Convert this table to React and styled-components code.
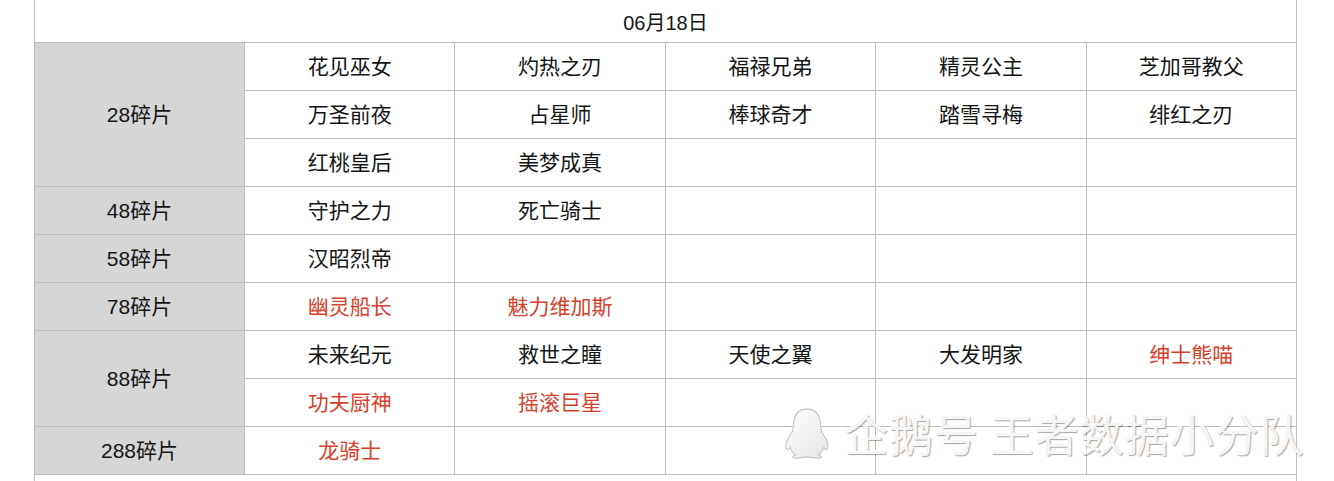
import styled, { createGlobalStyle } from 'styled-components';

const GlobalStyle = createGlobalStyle`
  html, body {
    margin: 0;
    padding: 0;
    background: #ffffff;
  }
  body {
    font-family: "Liberation Sans", "Noto Sans CJK SC", sans-serif;
  }
`

const RED = '#d6412c'

// each group: label + rows of 5 cells; "*" prefix = red
const grupos = [
  {
    label: '28碎片',
    linhas: [
      ['花见巫女', '灼热之刃', '福禄兄弟', '精灵公主', '芝加哥教父'],
      ['万圣前夜', '占星师', '棒球奇才', '踏雪寻梅', '绯红之刃'],
      ['红桃皇后', '美梦成真', '', '', ''],
    ],
  },
  { label: '48碎片', linhas: [['守护之力', '死亡骑士', '', '', '']] },
  { label: '58碎片', linhas: [['汉昭烈帝', '', '', '', '']] },
  { label: '78碎片', linhas: [['*幽灵船长', '*魅力维加斯', '', '', '']] },
  {
    label: '88碎片',
    linhas: [
      ['未来纪元', '救世之瞳', '天使之翼', '大发明家', '*绅士熊喵'],
      ['*功夫厨神', '*摇滚巨星', '', '', ''],
    ],
  },
  { label: '288碎片', linhas: [['*龙骑士', '', '', '', '']] },
]

export default function App() {
  return (
    <Pagina>
      <GlobalStyle />
      <Tabela>
        <Cabecalho>06月18日</Cabecalho>
        {grupos.map((g) => [
          <Rotulo key={g.label} $span={g.linhas.length}>{g.label}</Rotulo>,
          ...g.linhas.flatMap((linha, i) =>
            linha.map((nome, j) => (
              <Celula key={`${g.label}-${i}-${j}`} $vermelho={nome.startsWith('*')}>
                {nome.replace('*', '')}
              </Celula>
            ))
          ),
        ])}
        <Rodape />
      </Tabela>

      <MarcaDagua>
        <svg width="50" height="54" viewBox="0 0 48 52">
          <defs>
            <linearGradient id="pg" x1="0" y1="0" x2="1" y2="1">
              <stop offset="0" stopColor="#ffffff" />
              <stop offset="1" stopColor="#e4e4e4" />
            </linearGradient>
          </defs>
          <path
            d="M24 3 C14 3 11 11 11 19 C11 23 10 25 8 28 C5 32 3 37 4 41 C5 43 7 42 8 40 C9 44 11 46 13 47 C10 48 9 50 12 50 C16 51 20 49 24 49 C28 49 32 51 36 50 C39 50 38 48 35 47 C37 46 39 44 40 40 C41 42 43 43 44 41 C45 37 43 32 40 28 C38 25 37 23 37 19 C37 11 34 3 24 3 Z"
            fill="url(#pg)"
            stroke="#c2c2c2"
            strokeWidth="1"
          />
        </svg>
        <span>企鹅号 王者数据小分队</span>
      </MarcaDagua>
    </Pagina>
  )
}

const Pagina = styled.div`
  position: relative;
  width: 1334px;
  height: 481px;
  overflow: hidden;
`

const Tabela = styled.div`
  display: grid;
  grid-template-columns: 209px repeat(5, 1fr);
  grid-template-rows: 42px;
  grid-auto-rows: 47px;
  gap: 1px;
  width: 1261px;
  margin-left: 34px;
  padding: 0 1px;
  background: #bdbdbd;
  font-size: 21px;
  color: #151515;
`

const Cabecalho = styled.div`
  grid-column: 1 / -1;
  display: flex;
  align-items: center;
  justify-content: center;
  background: #ffffff;
  font-size: 20px;
`

const Rotulo = styled.div`
  grid-row: span ${(p) => p.$span};
  display: flex;
  align-items: center;
  justify-content: center;
  padding-bottom: 3px;
  background: #d6d6d6;
`

const Celula = styled.div`
  display: flex;
  align-items: center;
  justify-content: center;
  padding-bottom: 4px;
  background: #ffffff;
  color: ${(p) => (p.$vermelho ? RED : '#151515')};
`

const Rodape = styled.div`
  grid-column: 1 / -1;
  background: #ffffff;
`

const MarcaDagua = styled.div`
  position: absolute;
  left: 782px;
  top: 406px;
  display: flex;
  align-items: center;
  gap: 12px;
  pointer-events: none;

  span {
    font-family: "Noto Sans CJK SC", sans-serif;
    font-size: 44px;
    line-height: 52px;
    letter-spacing: 1px;
    color: #f6f6f6;
    white-space: pre;
    text-shadow: 1px 1px 1px rgba(0, 0, 0, 0.35), -1px -1px 0 rgba(255, 255, 255, 0.8);
  }
`
